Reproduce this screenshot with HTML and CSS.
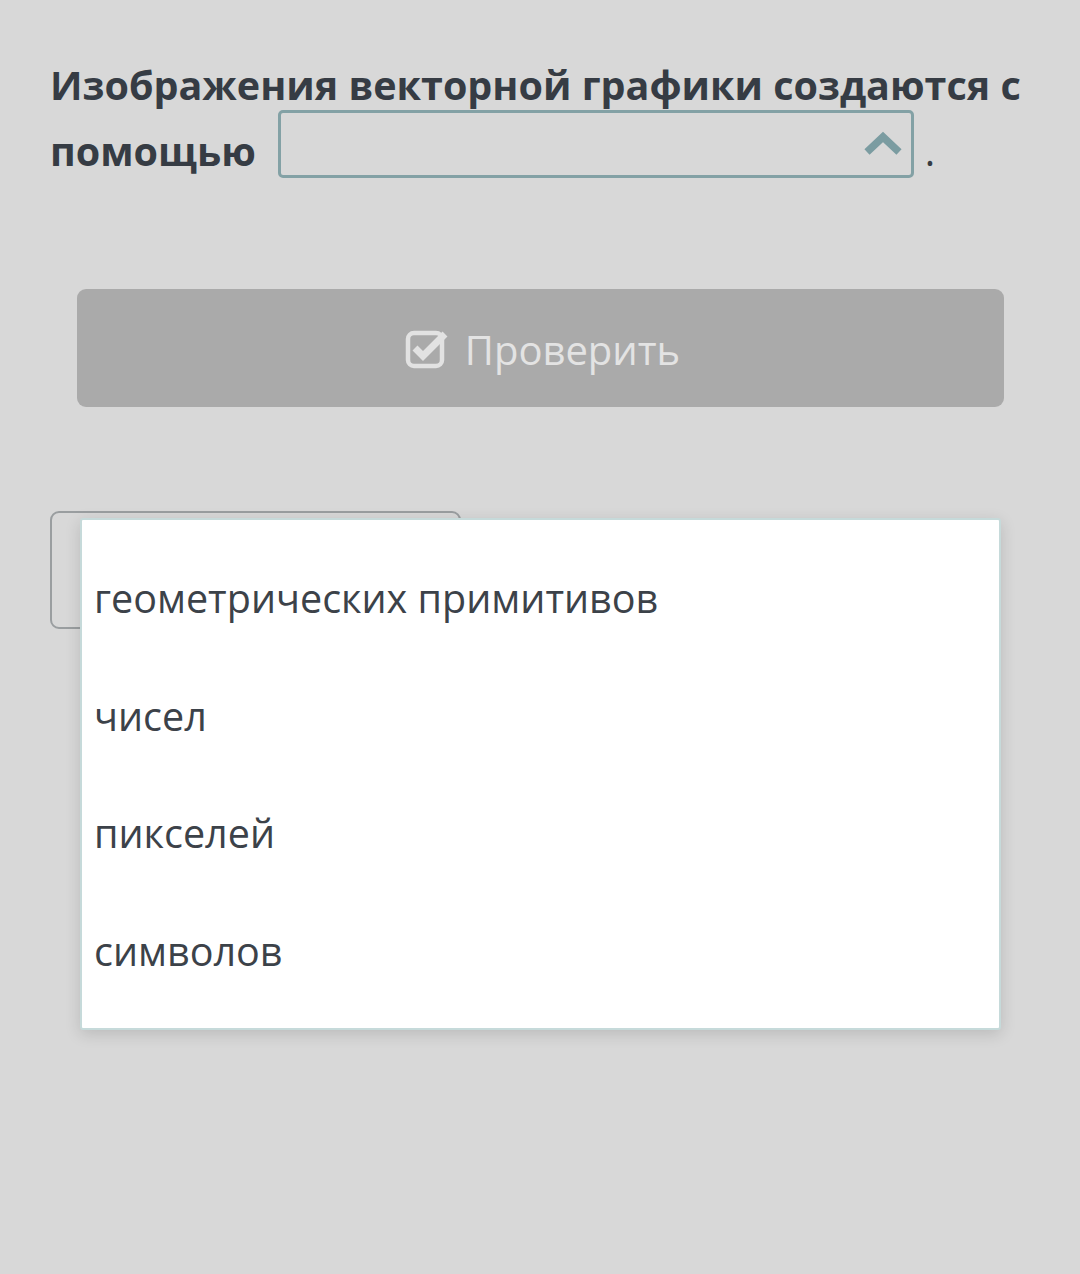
FILE: index.html
```html
<!DOCTYPE html>
<html lang="ru">
<head>
<meta charset="utf-8">
<link rel="stylesheet" href="styles.css">
</head>
<body>
<div class="page">
  <div class="question">
    Изображения векторной графики создаются с помощью<span class="select"><svg class="chev" width="40" height="26" viewBox="0 0 40 26"><path d="M4 21 L20 6 L36 21" fill="none" stroke="#7b9ca1" stroke-width="7.5"/></svg></span><span class="dot">.</span>
  </div>
  <div class="btn-wrap">
    <div class="btn">
      <svg class="check" width="44" height="42" viewBox="0 0 44 42"><rect x="3" y="6" width="34" height="33" rx="6" fill="none" stroke="#e2e2e2" stroke-width="4.5"/><path d="M10 21 L18 29 L40 7" fill="none" stroke="#e2e2e2" stroke-width="7"/></svg>
      <span>Проверить</span>
    </div>
  </div>
  <div class="answers">
    <div class="answer-box"></div>
    <ul class="menu">
      <li>геометрических примитивов</li>
      <li>чисел</li>
      <li>пикселей</li>
      <li>символов</li>
    </ul>
  </div>
</div>
</body>
</html>
```
FILE: styles.css
```css
html, body {
  margin: 0;
  padding: 0;
  background: #d8d8d8;
}
body {
  width: 1080px;
  height: 1274px;
  overflow: hidden;
  font-family: "Open Sans", "Noto Sans", sans-serif;
}
.page {
  position: relative;
  padding-top: 52px;
}
.question {
  padding-left: 50px;
  padding-right: 30px;
  font-size: 39.5px;
  font-weight: 700;
  line-height: 66px;
  color: #363c44;
}
.select {
  display: inline-block;
  box-sizing: border-box;
  width: 636px;
  height: 68px;
  margin-left: 22px;
  margin-top: -9px;
  vertical-align: -12px;
  border: 3px solid #83a1a5;
  border-radius: 5px;
  position: relative;
}
.chev {
  position: absolute;
  right: 8px;
  top: 18px;
}
.dot {
  margin-left: 11px;
  font-weight: 400;
}
.btn-wrap {
  padding: 105px 76px 0 77px;
}
.btn {
  height: 118px;
  background: #aaaaaa;
  border-radius: 9px;
  display: flex;
  align-items: center;
  justify-content: center;
  gap: 16px;
  color: #e3e3e3;
  font-size: 40px;
  padding-left: 4px;
}
.btn span {
  margin-top: 2px;
}
.answers {
  position: relative;
  padding: 104px 0 0 50px;
}
.answer-box {
  box-sizing: border-box;
  width: 411px;
  height: 118px;
  border: 2px solid #9a9ea0;
  border-radius: 9px;
}
.menu {
  position: absolute;
  left: 80px;
  top: 111px;
  box-sizing: border-box;
  width: 921px;
  height: 512px;
  margin: 0;
  padding: 20px 0 0 12px;
  list-style: none;
  background: #ffffff;
  border: 2px solid #c6dada;
  border-radius: 3px;
  box-shadow: 0 4px 16px rgba(0, 0, 0, 0.14);
}
.menu li {
  height: 117.5px;
  line-height: 117.5px;
  font-size: 39.5px;
  color: #3c4249;
}
```
